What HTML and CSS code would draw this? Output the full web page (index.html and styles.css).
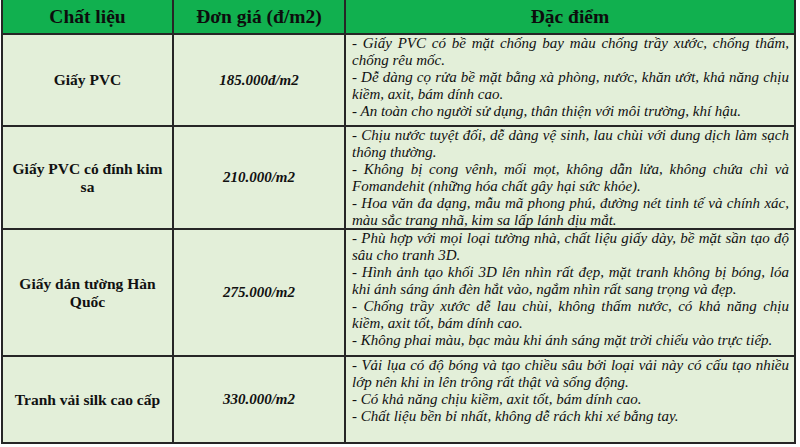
FILE: index.html
```html
<!DOCTYPE html>
<html lang="vi">
<head>
<meta charset="utf-8">
<link rel="stylesheet" href="styles.css">
</head>
<body>
<table class="price-table">
  <colgroup>
    <col class="c1"><col class="c2"><col class="c3">
  </colgroup>
  <thead>
    <tr class="row-head">
      <th>Chất liệu</th>
      <th>Đơn giá (đ/m2)</th>
      <th>Đặc điểm</th>
    </tr>
  </thead>
  <tbody>
    <tr class="r1">
      <td class="name">Giấy PVC</td>
      <td class="price">185.000đ/m2</td>
      <td class="desc">- Giấy PVC có bề mặt chống bay màu chống trầy xước, chống thấm, chống rêu mốc.<br>- Dễ dàng cọ rửa bề mặt bằng xà phòng, nước, khăn ướt, khả năng chịu kiềm, axit, bám dính cao.<br>- An toàn cho người sử dụng, thân thiện với môi trường, khí hậu.</td>
    </tr>
    <tr class="r2">
      <td class="name">Giấy PVC có đính kim sa</td>
      <td class="price">210.000/m2</td>
      <td class="desc">- Chịu nước tuyệt đối, dễ dàng vệ sinh, lau chùi với dung dịch làm sạch thông thường.<br>- Không bị cong vênh, mối mọt, không dẫn lửa, không chứa chì và Fomandehit (những hóa chất gây hại sức khỏe).<br>- Hoa văn đa dạng, mẫu mã phong phú, đường nét tinh tế và chính xác, màu sắc trang nhã, kim sa lấp lánh dịu mắt.</td>
    </tr>
    <tr class="r3">
      <td class="name">Giấy dán tường Hàn Quốc</td>
      <td class="price">275.000/m2</td>
      <td class="desc">- Phù hợp với mọi loại tường nhà, chất liệu giấy dày, bề mặt sần tạo độ sâu cho tranh 3D.<br>- Hình ảnh tạo khối 3D lên nhìn rất đẹp, mặt tranh không bị bóng, lóa khi ánh sáng ánh đèn hắt vào, ngắm nhìn rất sang trọng và đẹp.<br>- Chống trầy xước dễ lau chùi, không thấm nước, có khả năng chịu kiềm, axit tốt, bám dính cao.<br>- Không phai màu, bạc màu khi ánh sáng mặt trời chiếu vào trực tiếp.</td>
    </tr>
    <tr class="r4">
      <td class="name">Tranh vải silk cao cấp</td>
      <td class="price">330.000/m2</td>
      <td class="desc">- Vải lụa có độ bóng và tạo chiều sâu bởi loại vải này có cấu tạo nhiều lớp nên khi in lên trông rất thật và sống động.<br>- Có khả năng chịu kiềm, axit tốt, bám dính cao.<br>- Chất liệu bền bỉ nhất, không dễ rách khi xé bằng tay.</td>
    </tr>
  </tbody>
</table>
</body>
</html>
```

FILE: styles.css
```css
html, body {
  margin: 0;
  padding: 0;
  background: #ffffff;
}
body {
  padding: 0 0 0 1px;
  font-family: "Liberation Serif", "Times New Roman", serif;
  color: #111;
}
.price-table {
  border-collapse: collapse;
  table-layout: fixed;
  width: 793px;
}
.c1 { width: 171px; }
.c2 { width: 172px; }
.c3 { width: 450px; }
.price-table th,
.price-table td {
  border: 2px solid #262626;
  padding: 0;
}
.price-table .row-head th {
  border-top: none;
  background: #11b04f;
  height: 33px;
  font-size: 19.5px;
  font-weight: bold;
  text-align: center;
  vertical-align: middle;
  color: #0d0d0d;
}
tbody td {
  background: #e3efd9;
}
.price-table .name {
  font-weight: bold;
  font-size: 15.5px;
  text-align: center;
  vertical-align: middle;
  line-height: 18px;
  padding: 0 6px;
}
.price {
  font-weight: bold;
  font-style: italic;
  font-size: 15px;
  text-align: center;
  vertical-align: middle;
}
.price-table .desc {
  font-style: italic;
  font-size: 15px;
  line-height: 16.9px;
  text-align: justify;
  vertical-align: top;
  padding: 0 5px 0 6px;
}
.r1 td { height: 90px; }
.r2 td { height: 101px; }
.r3 td { height: 125px; }
.r4 td { height: 85px; }
```
